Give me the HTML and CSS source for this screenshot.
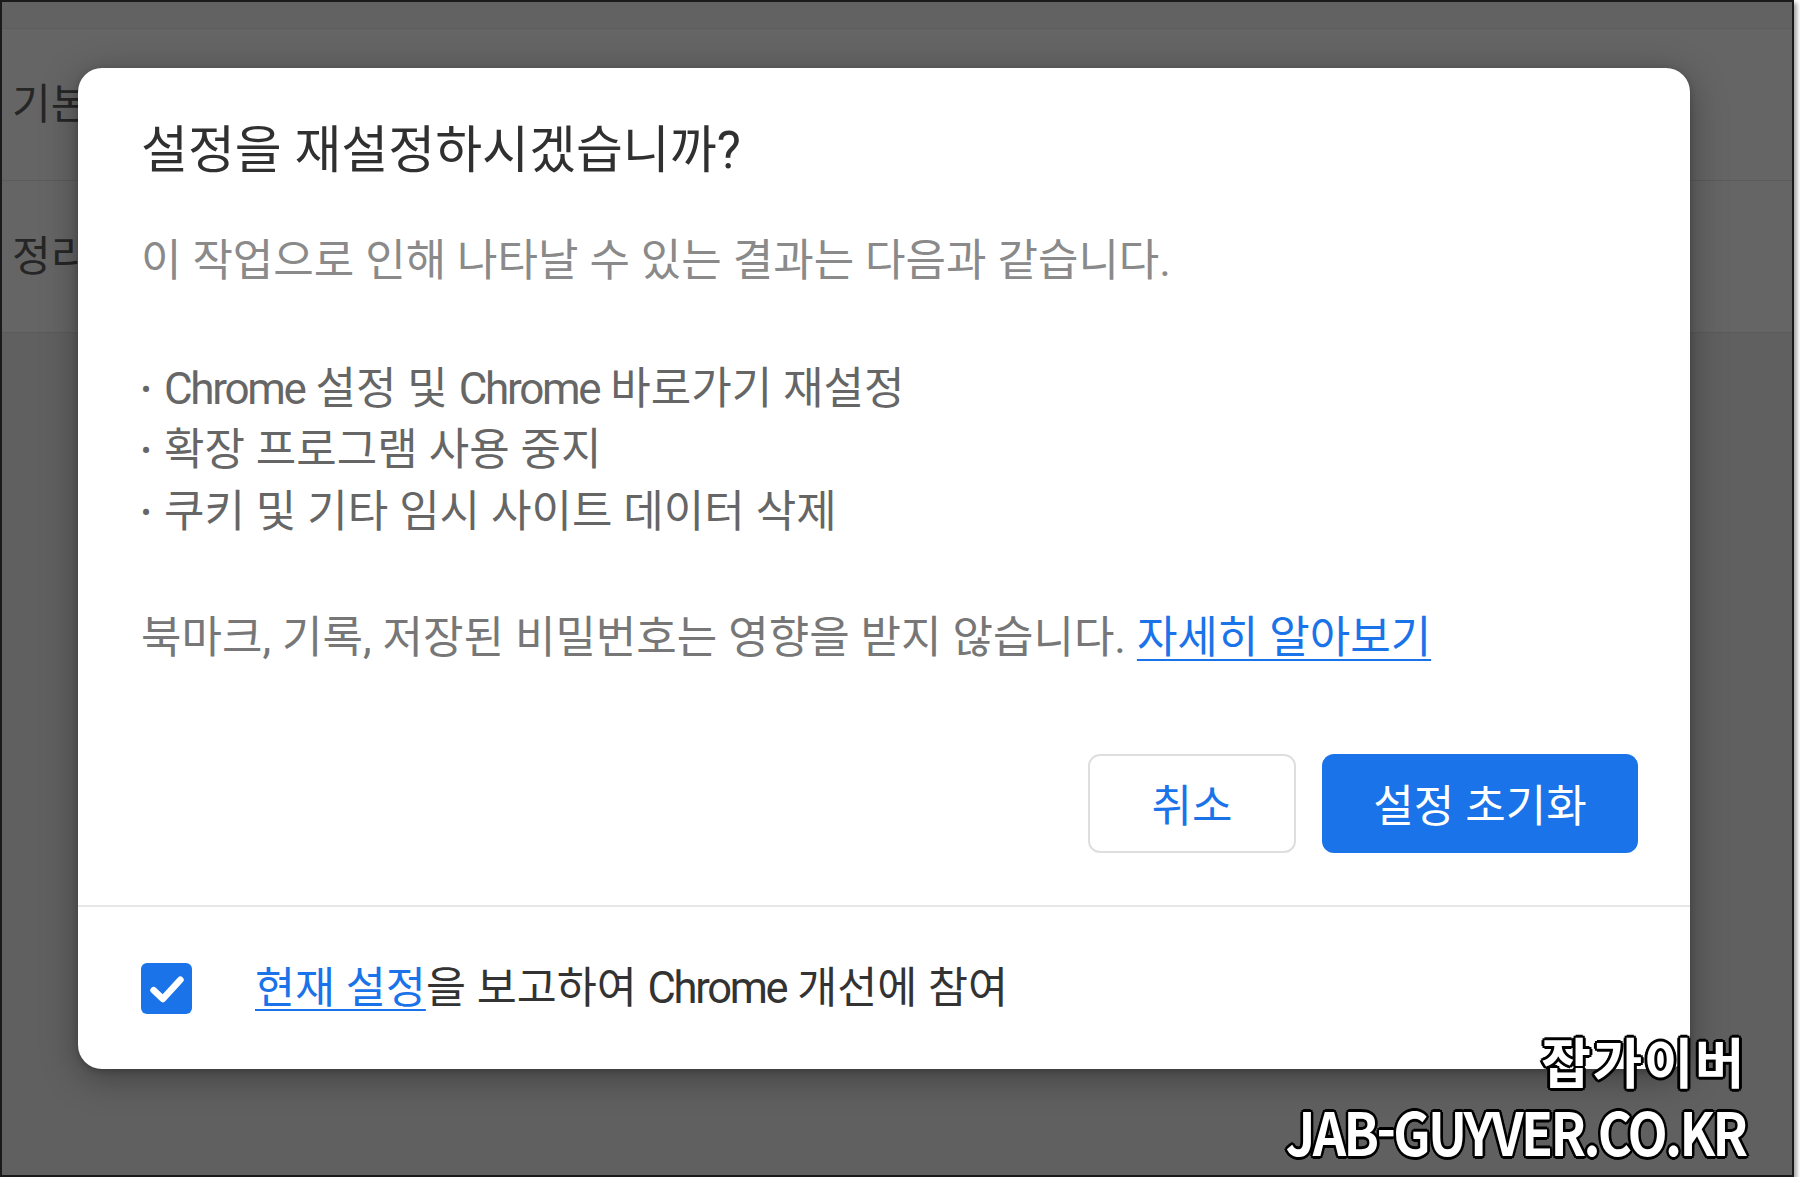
FILE: index.html
```html
<!DOCTYPE html>
<html lang="ko">
<head>
<meta charset="utf-8">
<title>설정 재설정</title>
<link rel="stylesheet" href="styles.css">
</head>
<body>
<div class="frame">
  <div class="page">
    <div class="strip"></div>
    <div class="row"><span class="row-label">기본</span></div>
    <div class="row"><span class="row-label">정리</span></div>
    <div class="rest"></div>
  </div>

  <div class="dialog" role="dialog">
    <div class="dialog-main">
      <h1 class="title">설정을 재설정하시겠습니까?</h1>
      <div class="body">
        <p class="lead">이 작업으로 인해 나타날 수 있는 결과는 다음과 같습니다.</p>
        <ul class="effects">
          <li><span class="item"><span class="en">Chrome</span> 설정 및 <span class="en">Chrome</span> 바로가기 재설정</span></li>
          <li><span class="item">확장 프로그램 사용 중지</span></li>
          <li><span class="item">쿠키 및 기타 임시 사이트 데이터 삭제</span></li>
        </ul>
        <p class="note">북마크, 기록, 저장된 비밀번호는 영향을 받지 않습니다. <a class="link" href="#">자세히 알아보기</a></p>
      </div>
      <div class="actions">
        <button class="btn btn-cancel">취소</button>
        <button class="btn btn-primary">설정 초기화</button>
      </div>
    </div>
    <div class="dialog-footer">
      <span class="checkbox">
        <svg viewBox="0 0 24 24" width="46" height="46"><path d="M5 12.6 L9.8 17.2 L19 7.2" fill="none" stroke="#fff" stroke-width="3.4" stroke-linecap="round" stroke-linejoin="round"/></svg>
      </span>
      <span class="footer-text"><a class="link" href="#">현재 설정</a>을 보고하여 <span class="en">Chrome</span> 개선에 참여</span>
    </div>
  </div>

  <div class="watermark">
    <div class="wm-ko">잡가이버</div>
    <div class="wm-en">JAB-GUYVER.CO.KR</div>
  </div>
</div>
</body>
</html>
```

FILE: styles.css
```css
html, body {
  margin: 0;
  padding: 0;
  background: #ffffff;
}

body {
  font-family: Roboto, "Noto Sans CJK KR", sans-serif;
}

.frame {
  position: relative;
  width: 1790px;
  height: 1173px;
  border: 2px solid #1a1a1a;
  background: #656565;
  box-shadow: 3px 3px 4px rgba(0, 0, 0, 0.35);
  overflow: hidden;
}

/* dimmed page behind the dialog */
.page {
  display: flex;
  flex-direction: column;
  height: 100%;
}

.strip {
  height: 26px;
  background: #626262;
  border-bottom: 1px solid #5d5d5d;
}

.row {
  height: 151px;
  border-bottom: 1px solid #5b5b5b;
  display: flex;
  align-items: center;
  padding-left: 10px;
}

.row-label {
  font-family: "Noto Sans CJK KR", sans-serif;
  font-size: 42px;
  line-height: 1;
  margin-top: -8px;
  color: #262626;
}

.rest {
  flex: 1;
  background: #606060;
}

/* dialog */
.dialog {
  position: absolute;
  left: 76px;
  top: 66px;
  width: 1612px;
  background: #ffffff;
  border-radius: 24px;
  box-shadow: 0 8px 36px rgba(0, 0, 0, 0.35), 0 2px 6px rgba(0, 0, 0, 0.2);
}

.dialog-main {
  padding: 53px 52px 52px 63px;
}

.title {
  margin: 0;
  font-family: Roboto, "Noto Sans CJK KR", sans-serif;
  font-size: 51px;
  line-height: 60px;
  font-weight: 400;
  color: #303030;
}

.en {
  letter-spacing: -2.3px;
}

.body {
  margin-top: 50px;
  font-size: 44px;
  line-height: 61.5px;
}

.lead {
  margin: 0;
  color: #8a8a8a;
}

.effects {
  list-style: none;
  margin: 66px 0 0 0;
  padding: 0;
  color: #666666;
}

.effects li {
  display: flex;
  align-items: center;
}

.effects li::before {
  content: "•";
  flex: none;
  width: 23px;
  font-size: 30px;
  line-height: 61.5px;
}

.note {
  margin: 65px 0 0 0;
  color: #777777;
}

.link {
  color: #1a73e8;
  text-decoration: underline;
  text-underline-offset: 6px;
  text-decoration-thickness: 2px;
}

.actions {
  display: flex;
  justify-content: flex-end;
  gap: 26px;
  margin-top: 84px;
}

.btn {
  font-family: Roboto, "Noto Sans CJK KR", sans-serif;
  font-size: 44px;
  height: 99px;
  border-radius: 12px;
  cursor: pointer;
}

.btn-cancel {
  width: 208px;
  background: #ffffff;
  border: 2px solid #dedede;
  color: #1a73e8;
}

.btn-primary {
  width: 316px;
  background: #1a73e8;
  border: none;
  color: #ffffff;
}

.dialog-footer {
  border-top: 2px solid #e6e6e6;
  display: flex;
  align-items: center;
  gap: 63px;
  padding: 54px 52px 52px 63px;
}

.checkbox {
  width: 51px;
  height: 51px;
  border-radius: 6px;
  background: #1a73e8;
  display: flex;
  align-items: center;
  justify-content: center;
}

.footer-text {
  font-size: 43.5px;
  line-height: 56px;
  color: #333333;
}

/* watermark overlay */
.watermark {
  position: absolute;
  right: 46px;
  bottom: 9px;
  display: flex;
  flex-direction: column;
  align-items: flex-end;
  font-family: "Noto Sans CJK KR", sans-serif;
  font-weight: 700;
  color: #ffffff;
  text-shadow:
    -3px 0 0 #000, 3px 0 0 #000, 0 -3px 0 #000, 0 3px 0 #000,
    -2px -2px 0 #000, 2px -2px 0 #000, -2px 2px 0 #000, 2px 2px 0 #000;
}

.wm-ko {
  font-size: 54px;
  line-height: 66px;
  letter-spacing: 1.5px;
}

.wm-en {
  font-size: 60px;
  line-height: 72px;
  letter-spacing: -3px;
  transform: scaleX(0.87);
  transform-origin: right center;
}
```
